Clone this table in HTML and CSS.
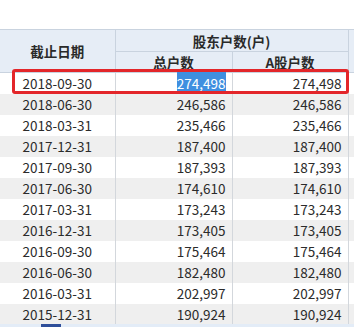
FILE: index.html
```html
<!DOCTYPE html>
<html lang="zh-CN">
<head>
<meta charset="utf-8">
<link rel="stylesheet" href="styles.css">
</head>
<body>
<div class="page">
  <div class="top-space"></div>
  <div class="grid-wrap">
    <table class="grid">
      <colgroup>
        <col class="c-date"><col class="c-total"><col class="c-a"><col class="c-extra">
      </colgroup>
      <thead>
        <tr class="h1">
          <th rowspan="2" class="date-head">截止日期</th>
          <th colspan="2" class="group-head">股东户数(户)</th>
          <th rowspan="2" class="extra"></th>
        </tr>
        <tr class="h2">
          <th>总户数</th>
          <th>A股户数</th>
        </tr>
      </thead>
      <tbody>
        <tr><td class="d">2018-09-30</td><td class="n"><span class="sel">274,498</span></td><td class="n">274,498</td><td class="extra"></td></tr>
        <tr><td class="d">2018-06-30</td><td class="n">246,586</td><td class="n">246,586</td><td class="extra"></td></tr>
        <tr><td class="d">2018-03-31</td><td class="n">235,466</td><td class="n">235,466</td><td class="extra"></td></tr>
        <tr><td class="d">2017-12-31</td><td class="n">187,400</td><td class="n">187,400</td><td class="extra"></td></tr>
        <tr><td class="d">2017-09-30</td><td class="n">187,393</td><td class="n">187,393</td><td class="extra"></td></tr>
        <tr><td class="d">2017-06-30</td><td class="n">174,610</td><td class="n">174,610</td><td class="extra"></td></tr>
        <tr><td class="d">2017-03-31</td><td class="n">173,243</td><td class="n">173,243</td><td class="extra"></td></tr>
        <tr><td class="d">2016-12-31</td><td class="n">173,405</td><td class="n">173,405</td><td class="extra"></td></tr>
        <tr><td class="d">2016-09-30</td><td class="n">175,464</td><td class="n">175,464</td><td class="extra"></td></tr>
        <tr><td class="d">2016-06-30</td><td class="n">182,480</td><td class="n">182,480</td><td class="extra"></td></tr>
        <tr><td class="d">2016-03-31</td><td class="n">202,997</td><td class="n">202,997</td><td class="extra"></td></tr>
        <tr><td class="d">2015-12-31</td><td class="n">190,924</td><td class="n">190,924</td><td class="extra"></td></tr>
      </tbody>
    </table>
    <div class="mark"></div>
  </div>
  <div class="bottom-bar"><span class="thumb"></span></div>
</div>
</body>
</html>
```

FILE: styles.css
```css
html, body {
  margin: 0;
  padding: 0;
  background: #ffffff;
}
body {
  width: 354px;
  height: 327px;
  overflow: hidden;
  font-family: "Noto Sans CJK SC", "Noto Sans", sans-serif;
  color: #2b2b2b;
}
.page {
  position: relative;
  width: 354px;
  height: 327px;
  overflow: hidden;
}
.top-space {
  height: 29px;
}
.grid-wrap {
  position: relative;
}
.grid {
  border-collapse: collapse;
  table-layout: fixed;
  width: 380px;
  font-size: 13.5px;
}
.c-date { width: 115px; }
.c-total { width: 117px; }
.c-a { width: 116px; }
.c-extra { width: 32px; }
.grid th {
  background: #e6edf6;
  font-weight: bold;
  color: #2a2a2a;
  font-size: 13.5px;
  border: 1px solid #c9d3df;
  padding: 0;
  line-height: 20px;
}
.h1 th { height: 21px; }
.h2 th { height: 19px; }
.grid th.date-head { border-left: none; }
.grid td {
  padding: 0;
  height: 21px;
  line-height: 21px;
  border-left: 1px solid #d3d7dc;
  border-right: 1px solid #d3d7dc;
}
.grid td.d {
  text-align: center;
  border-left: none;
}
.grid td.n {
  text-align: right;
  padding-right: 6px;
}
.grid tbody tr:nth-child(even) td {
  background: #efefef;
}
.grid tbody tr:nth-child(odd) td {
  background: #ffffff;
}
.sel {
  background: #3f8fe0;
  color: #ffffff;
  padding: 1px 0;
}
.mark {
  position: absolute;
  left: 12px;
  top: 40px;
  width: 331px;
  height: 19px;
  border: 3px solid #e3262a;
  border-radius: 3px;
}
.bottom-bar {
  position: absolute;
  left: 0;
  top: 324px;
  width: 354px;
  height: 3px;
  background: #e3ecf7;
}
.thumb {
  position: absolute;
  left: 41px;
  top: 0;
  width: 20px;
  height: 3px;
  background: #2f4f9a;
}
```
